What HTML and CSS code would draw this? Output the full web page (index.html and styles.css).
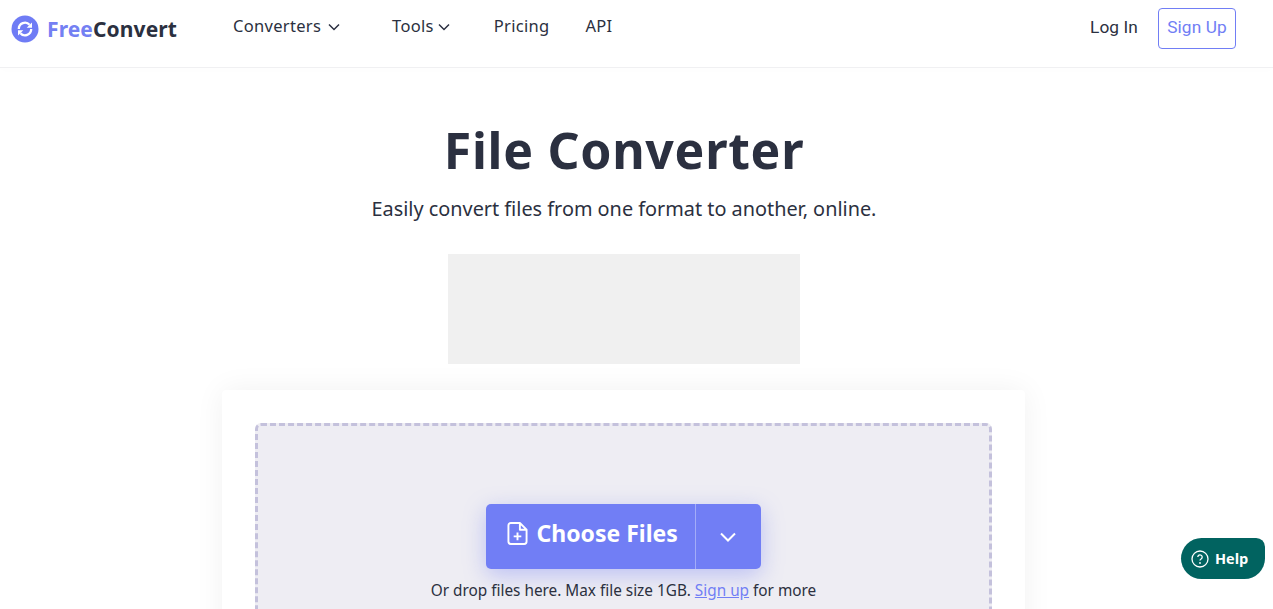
FILE: index.html
```html
<!DOCTYPE html>
<html lang="en">
<head>
<meta charset="utf-8">
<title>File Converter</title>
<link rel="stylesheet" href="styles.css">
</head>
<body>
<header class="header">
  <a class="logo">
    <svg class="logo-icon" viewBox="0 0 28 28" width="28" height="28">
      <circle cx="14" cy="14" r="13.500" fill="#6f7cf5"/>
      <path d="M7.800 14a6.200 6.200 0 0 1 10.800-4.200M20.200 14a6.200 6.200 0 0 1-10.800 4.200" fill="none" stroke="#fff" stroke-width="2.300"/>
      <path d="M21 7.500v5.300h-5.300zM7 20.500v-5.300h5.300z" fill="#fff"/>
    </svg>
    <span class="logo-text"><span class="logo-free">Free</span>Convert</span>
  </a>
  <nav class="nav">
    <a class="nav-item nav-conv">Converters<svg class="caret" viewBox="0 0 12 8" width="12" height="8"><path d="M1 1.500l5 5 5-5" fill="none" stroke="#2b3040" stroke-width="1.500"/></svg></a>
    <a class="nav-item nav-tools">Tools<svg class="caret caret-tools" viewBox="0 0 12 8" width="12" height="8"><path d="M1 1.500l5 5 5-5" fill="none" stroke="#2b3040" stroke-width="1.500"/></svg></a>
    <a class="nav-item nav-pricing">Pricing</a>
    <a class="nav-item">API</a>
  </nav>
  <div class="auth">
    <a class="login">Log In</a>
    <a class="signup">Sign Up</a>
  </div>
</header>
<main class="main">
  <h1 class="title">File Converter</h1>
  <p class="subtitle">Easily convert files from one format to another, online.</p>
  <div class="ad"></div>
  <section class="card">
    <div class="drop">
      <div class="btn">
        <div class="btn-main">
          <svg viewBox="0 0 22 26" width="21" height="25" class="file-icon">
            <path d="M13.500 2H4a2.500 2.500 0 0 0-2.500 2.500v17A2.500 2.500 0 0 0 4 24h14a2.500 2.500 0 0 0 2.500-2.500V9zM13.500 2v7h7M11 12v8M7 16h8" fill="none" stroke="#fff" stroke-width="2" stroke-linejoin="round"/>
          </svg>
          <span class="btn-label">Choose Files</span>
        </div>
        <div class="btn-side">
          <svg viewBox="0 0 18 12" width="18" height="12"><path d="M2 2.500l7 7 7-7" fill="none" stroke="#fff" stroke-width="2"/></svg>
        </div>
      </div>
      <p class="hint">Or drop files here. Max file size 1GB. <a class="hint-link">Sign up</a> for more</p>
    </div>
  </section>
</main>
<a class="help">
  <svg viewBox="0 0 18 18" width="18" height="18"><circle cx="9" cy="9" r="8" fill="none" stroke="#fff" stroke-width="1.300"/><path d="M6.800 7a2.200 2.200 0 1 1 3.300 2c-.8.500-1.100.900-1.100 1.600" fill="none" stroke="#fff" stroke-width="1.300"/><circle cx="9" cy="13" r=".9" fill="#fff"/></svg>
  <span>Help</span>
</a>
</body>
</html>
```
FILE: styles.css
```css
* { box-sizing: border-box; }
html, body { margin: 0; height: 609px; overflow: hidden; background: #fff; }
body { font-family: "Noto Sans", "Open Sans", sans-serif; color: #2b3040; }
.header { height: 68px; border-bottom: 1px solid #f0f0f2; box-shadow: 0 2px 8px rgba(0,0,0,.012); display: flex; align-items: flex-start; padding: 0 37px 0 11px; }
.logo { display: flex; align-items: center; margin-top: 15px; width: 222px; }
.logo-icon { margin-right: 8px; width: 28px; height: 28px; }
.logo-text { font-weight: 700; font-size: 21px; line-height: 28px; letter-spacing: .1px; color: #2b3040; }
.logo-free { color: #7480f3; }
.nav { display: flex; font-size: 16.500px; line-height: 24px; letter-spacing: .3px; margin-top: 14px; flex: 1; }
.nav-item { display: flex; align-items: center; }
.caret { margin-left: 7px; margin-top: 2px; }
.caret-tools { margin-left: 4px; }
.nav-conv { margin-right: 52px; }
.nav-tools { margin-right: 44px; }
.nav-pricing { margin-right: 36px; }
.auth { display: flex; align-items: flex-start; margin-top: 7px; font-family: Roboto, sans-serif; font-size: 17.300px; letter-spacing: .1px; }
.login { line-height: 40px; margin-right: 20px; color: #2b3040; }
.signup { width: 78px; height: 41px; margin-top: 1px; line-height: 37px; text-align: center; border: 1px solid #717ef5; border-radius: 4px; color: #717ef5; }
.main { width: 1248px; height: 541px; overflow: hidden; display: flex; flex-direction: column; align-items: center; }
.title { margin: 48px 0 0; font-size: 50px; line-height: 68px; font-weight: 700; letter-spacing: .7px; color: #2b3040; }
.subtitle { margin: 9px 0 0; font-size: 19.850px; line-height: 32px; }
.ad { flex: none; width: 352px; height: 110px; margin-top: 29px; background: #f0f0f0; }
.card { flex: none; width: 803px; height: 400px; margin: 26px 0 0 -1px; padding: 33px; background: #fff; border-radius: 4px; box-shadow: 0 0 30px rgba(0,0,0,.06); }
.drop { width: 737px; height: 340px; padding-top: 78px; background: #eeedf3; border: 3px dashed #c4c1dc; border-radius: 6px; display: flex; flex-direction: column; align-items: center; }
.btn { display: flex; flex: none; width: 275px; height: 65px; margin-right: 1px; background: #717ef5; border-radius: 5px; box-shadow: 0 6px 22px rgba(113,126,245,.4); color: #fff; }
.btn-main { width: 210px; display: flex; align-items: center; gap: 9px; padding-left: 21px; border-right: 1px solid #a3acf8; font-size: 23px; font-weight: 700; }
.btn-label { margin-top: -7px; }
.file-icon { flex: none; margin-top: -6px; }
.btn-side { flex: 1; display: flex; align-items: center; justify-content: center; }
.hint { margin: 9px 0 0; font-size: 15.350px; line-height: 24px; color: #2b3040; }
.hint-link { color: #717ef5; text-decoration: underline; }
.help { position: absolute; left: 1181px; top: 538px; width: 84px; height: 41px; display: flex; align-items: center; gap: 6px; padding-left: 10px; background: #016360; color: #fff; border-radius: 21px 9px 21px 21px; font-family: "Open Sans", sans-serif; font-size: 14.500px; font-weight: 700; }
```
